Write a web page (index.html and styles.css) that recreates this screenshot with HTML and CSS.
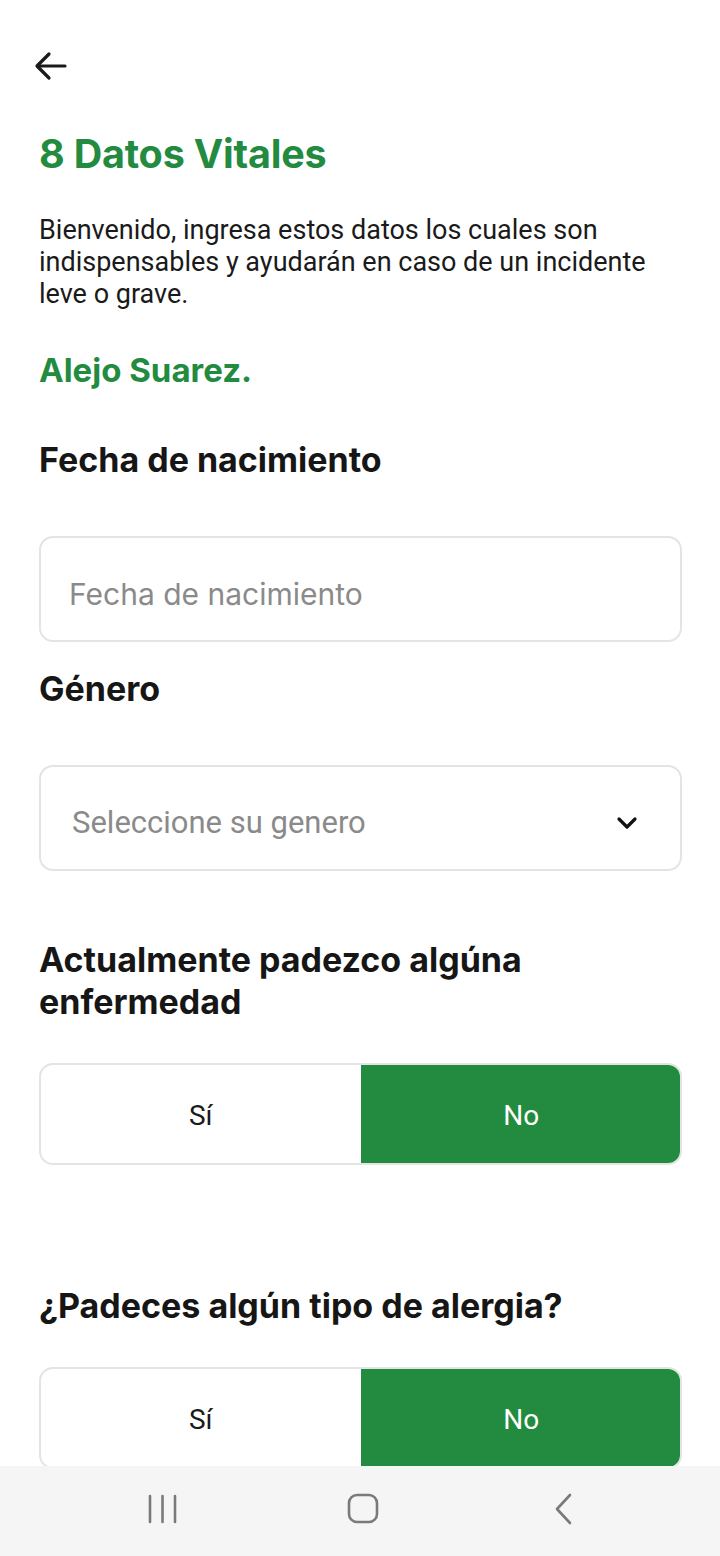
FILE: index.html
```html
<!DOCTYPE html>
<html lang="es">
<head>
<meta charset="utf-8">
<title>8 Datos Vitales</title>
<link rel="stylesheet" href="styles.css">
</head>
<body>
<main class="page">
  <header class="topbar">
    <button class="back" aria-label="Volver">
      <svg width="34" height="30" viewBox="0 0 34 30" fill="none" stroke="#1a1a1a" stroke-width="3.2" stroke-linecap="round" stroke-linejoin="round">
        <path d="M31 15H4"/>
        <path d="M15 3L3 15l12 12"/>
      </svg>
    </button>
  </header>

  <h1 class="title">8 Datos Vitales</h1>
  <p class="intro">Bienvenido, ingresa estos datos los cuales son indispensables y ayudarán en caso de un incidente leve o grave.</p>
  <p class="name">Alejo Suarez.</p>

  <section class="field field-fecha">
    <h2 class="label">Fecha de nacimiento</h2>
    <div class="box input"><span class="placeholder">Fecha de nacimiento</span></div>
  </section>

  <section class="field field-genero">
    <h2 class="label">Género</h2>
    <div class="box select">
      <span class="placeholder placeholder-select">Seleccione su genero</span>
      <svg class="chev" width="22" height="14" viewBox="0 0 22 14" fill="none" stroke="#111" stroke-width="3.2" stroke-linecap="round" stroke-linejoin="round"><path d="M3 3l8 8 8-8"/></svg>
    </div>
  </section>

  <section class="field field-enfermedad">
    <h2 class="label">Actualmente padezco algúna enfermedad</h2>
    <div class="toggle">
      <span class="opt">Sí</span>
      <span class="opt on">No</span>
    </div>
  </section>

  <section class="field field-alergia">
    <h2 class="label">¿Padeces algún tipo de alergia?</h2>
    <div class="toggle">
      <span class="opt">Sí</span>
      <span class="opt on">No</span>
    </div>
  </section>
</main>

<nav class="navbar">
  <span class="navbtn"><svg width="30" height="30" viewBox="0 0 30 30" fill="none" stroke="#7a7a7a" stroke-width="2.6" stroke-linecap="round"><path d="M3 2v26M15.5 2v26M28 2v26"/></svg></span>
  <span class="navbtn"><svg width="32" height="32" viewBox="0 0 32 32" fill="none" stroke="#7a7a7a" stroke-width="2.6"><rect x="2" y="2" width="28" height="27" rx="8"/></svg></span>
  <span class="navbtn"><svg width="20" height="32" viewBox="0 0 20 32" fill="none" stroke="#7a7a7a" stroke-width="2.6" stroke-linecap="round" stroke-linejoin="round"><path d="M16 2L3 16l13 14"/></svg></span>
</nav>
</body>
</html>
```

FILE: styles.css
```css
* { box-sizing: border-box; }
html, body { margin: 0; padding: 0; }
body {
  width: 720px;
  height: 1556px;
  overflow: hidden;
  background: #ffffff;
  font-family: Roboto, "Liberation Sans", sans-serif;
  color: #1a1a1a;
}
.page {
  padding: 0 38px 0 39px;
}
.topbar {
  height: 110px;
  padding-top: 51px;
}
.back {
  display: block;
  border: 0;
  background: none;
  padding: 0;
  margin-left: -5px;
  cursor: pointer;
}
.title {
  margin: 20px 0 0;
  font-family: Inter, "Open Sans", sans-serif;
  font-weight: 700;
  font-size: 39.5px;
  line-height: 48px;
  letter-spacing: -0.2px;
  color: #238b3f;
}
.intro {
  margin: 36px 0 0;
  font-size: 27px;
  line-height: 32px;
  color: #1a1a1a;
}
.name {
  margin: 40px 0 0;
  font-family: Inter, "Open Sans", sans-serif;
  font-weight: 700;
  font-size: 33px;
  line-height: 40px;
  color: #238b3f;
}
.label {
  margin: 0;
  font-family: Inter, "Open Sans", sans-serif;
  font-weight: 700;
  font-size: 34px;
  line-height: 42px;
  color: #161616;
}
.field-fecha { margin-top: 49px; }
.field-genero { margin-top: 26px; }
.field-enfermedad { margin-top: 68px; }
.field-alergia { margin-top: 120px; }
.box {
  margin-top: 55px;
  height: 106px;
  border: 2px solid #e4e4e4;
  border-radius: 14px;
  display: flex;
  align-items: center;
  padding: 9px 28px 0;
}
.placeholder {
  font-family: Inter, "Open Sans", sans-serif;
  font-size: 30px;
  color: #8a8a8a;
}
.select { justify-content: space-between; padding: 9px 42px 0 31px; }
.placeholder-select {
  font-family: Roboto, "Liberation Sans", sans-serif;
  font-size: 31px;
}
.toggle {
  margin-top: 40px;
  height: 102px;
  border: 2px solid #e4e4e4;
  border-radius: 14px;
  display: grid;
  grid-template-columns: 1fr 1fr;
  overflow: hidden;
}
.opt {
  display: flex;
  align-items: center;
  justify-content: center;
  padding-top: 3px;
  font-size: 28px;
  color: #1a1a1a;
}
.opt.on {
  background: #238b3f;
  color: #ffffff;
  margin: -2px -2px -2px 0;
}
.navbar {
  position: fixed;
  left: 0;
  bottom: 0;
  width: 720px;
  height: 90px;
  background: #f5f5f5;
  display: flex;
  align-items: center;
  justify-content: center;
  gap: 121px;
  padding: 0 0 4px 6px;
}
.navbtn {
  width: 80px;
  display: flex;
  justify-content: center;
}
```
